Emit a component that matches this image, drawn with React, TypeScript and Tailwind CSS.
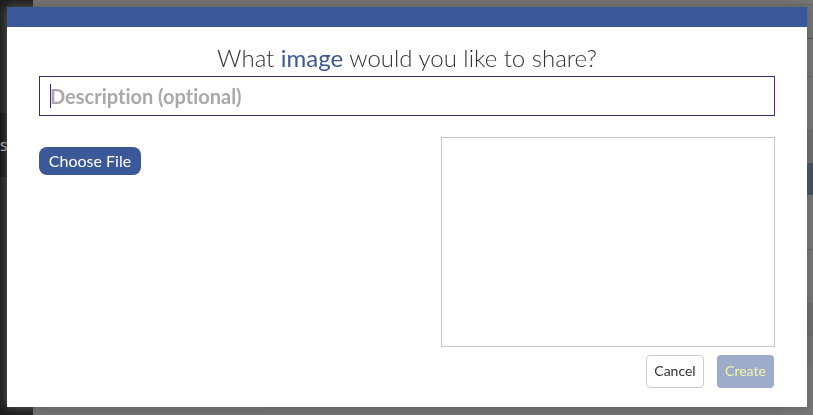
import { useState } from "react";

function Backdrop() {
  return (
    <div aria-hidden="true" className="flex min-h-screen overflow-hidden bg-[#737373]">
      <div className="w-[33px] shrink-0 bg-[#1d1d1d]">
        <div className="h-[113px]" />
        <div className="flex h-16 items-center bg-[#101010] font-['Open_Sans',sans-serif] text-base text-[#c0c0c0]">
          s
        </div>
      </div>
      <div className="flex flex-1 flex-col justify-end pl-2">
        <div className="mb-1 h-10 w-[226px] rounded-sm border border-[#6a6a6a] bg-[#757575]" />
      </div>
      <div className="w-8 shrink-0 bg-[#757675]">
        <div className="h-[5px] border-b border-[#666666]" />
        <div className="h-[34px] border-b border-[#4c4c4c] bg-[#737373]" />
        <div className="h-[38px] border-b border-[#686868]" />
        <div className="h-[52px]" />
        <div className="h-[34px] bg-[#6c6e6c]" />
        <div className="h-8 bg-[#3a4768]" />
        <div className="h-[55px] border-b border-[#656565]" />
        <div className="h-[52px]" />
        <div className="h-[34px] border-b border-[#686868] bg-[#6d6d6d]" />
        <div className="h-[26px] bg-[#717271]" />
      </div>
    </div>
  );
}

export default function App() {
  const [description, setDescription] = useState("");

  return (
    <div className="relative font-['Lato','Open_Sans',sans-serif] [font-variant-ligatures:none]">
      <Backdrop />
      <div className="fixed inset-0 flex pt-[7px] pr-1.5 pb-2 pl-[7px]">
        <form
          role="dialog"
          aria-labelledby="share-title"
          onSubmit={(e) => e.preventDefault()}
          className="flex flex-1 flex-col bg-white shadow-[0_0_10px_#5f5f5f]"
        >
          <div className="h-5 shrink-0 bg-[#3b5998]" />
          <div className="flex flex-1 flex-col px-8 pt-[15px]">
            <h1
              id="share-title"
              className="h-[34px] text-center text-2xl leading-8 font-light text-[#333333]"
            >
              What <span className="font-normal text-[#3b5998]">image</span> would you like to
              share?
            </h1>
            <div className="relative">
              <input
                type="text"
                aria-label="Description"
                placeholder="Description (optional)"
                value={description}
                onChange={(e) => setDescription(e.target.value)}
                className="block h-10 w-full border border-[#44296a] px-2.5 text-xl font-bold text-[#333333] outline-none placeholder:text-[#a9a9a9]"
              />
              <span className="absolute top-2 left-[11px] h-6 w-px bg-[#44296a]" />
            </div>
            <div className="mt-[21px] flex items-start justify-between">
              <label className="mt-2.5 flex h-7 w-[102px] cursor-pointer items-center justify-center rounded-lg bg-[#3b5998] text-base text-white">
                Choose File
                <input type="file" accept="image/*" className="sr-only" />
              </label>
              <div className="h-[210px] w-[334px] border border-[#c8c8c8]" />
            </div>
            <div className="mt-2 mr-px flex justify-end gap-[13px] text-sm">
              <button
                type="button"
                className="h-[33px] w-[58px] rounded border border-[#cccccc] bg-white pb-0.5 text-[#333333]"
              >
                Cancel
              </button>
              <button
                type="submit"
                className="h-[33px] w-[57px] rounded bg-[#9dacca] pb-0.5 text-[#f3f5a5]"
              >
                Create
              </button>
            </div>
          </div>
        </form>
      </div>
    </div>
  );
}
